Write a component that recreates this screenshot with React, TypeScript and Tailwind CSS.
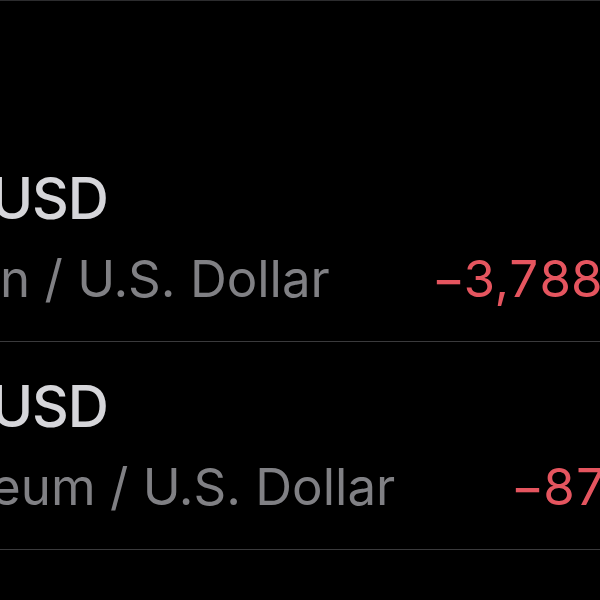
import React from "react";

const rows = [
  { sym: "USD", name: "n / U.S. Dollar", nameMl: "ml-0", value: "−3,788.12", pad: "pl-[432px]" },
  { sym: "USD", name: "eum / U.S. Dollar", nameMl: "-ml-[9px]", value: "−87.45", pad: "pl-[511px]" },
];

export default function App() {
  return (
    <div
      className="w-[600px] h-[600px] overflow-hidden bg-black border-t border-[#2c2c2e]"
      style={{ fontFamily: "Inter, 'Noto Sans', sans-serif" }}
    >
      <div className="pt-[133px]">
        {rows.map((r, i) => (
          <div key={i} className="pt-[36px] pb-[37px] border-b border-[#3a3a3c] whitespace-nowrap">
            <div className="text-[57px] leading-[58px] font-medium tracking-[-0.02em] text-[#d6d6da] -ml-[9px]">
              {r.sym}
            </div>
            <div className="mt-[25px] relative h-[51px] text-[51px] leading-[51px]">
              <span className={"text-[#808084] inline-block " + r.nameMl}>{r.name}</span>
              <span className="absolute top-0 left-0 text-[#e5555f] tabular-nums tracking-[-0.03em]">
                <span className={r.pad + " inline-block"}>{r.value}</span>
              </span>
            </div>
          </div>
        ))}
      </div>
    </div>
  );
}
